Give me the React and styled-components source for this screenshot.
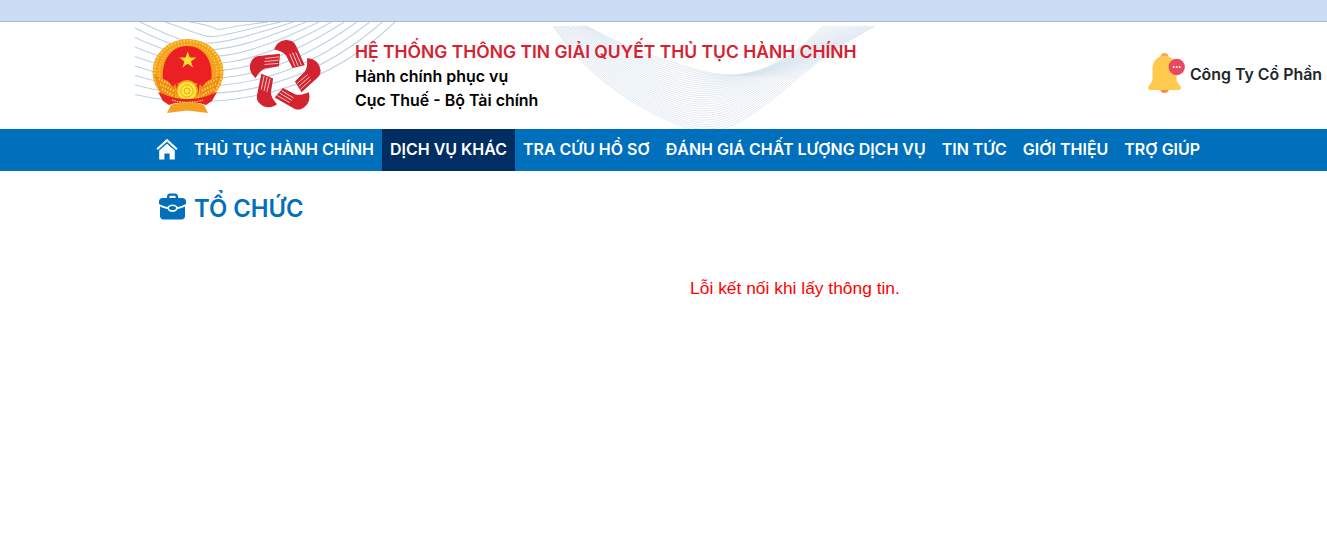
import React from "react"
import styled, { createGlobalStyle } from "styled-components"

/**
 * Styles
 */

const GlobalStyle = createGlobalStyle`
  html, body {
    margin: 0;
    padding: 0;
    background: #fff;
    font-family: Inter, "Noto Sans", sans-serif;
  }
`

const TopStrip = styled.div`
  height: 21px;
  background: #cbdcf5;
  border-bottom: 1px solid #a8b8cf;
`

const Header = styled.header`
  position: relative;
  display: flex;
  align-items: center;
  justify-content: space-between;
  height: 107px;
  padding: 0 5px 0 151px;
  overflow: hidden;
`

const HeaderArt = styled.svg`
  position: absolute;
  left: 0;
  top: 0;
  pointer-events: none;
`

const Brand = styled.div`
  position: relative;
  display: flex;
  align-items: center;
`

const Emblem = styled.svg`
  display: block;
  width: 74px;
  height: 78px;
  margin-right: 25px;
`

const StarLogo = styled.svg`
  display: block;
  width: 72px;
  height: 78px;
  margin-right: 33px;
`

const BrandText = styled.div`
  display: flex;
  flex-direction: column;
  margin-top: 1px;
`

const Title = styled.div`
  font-size: 17.48px;
  line-height: 24px;
  font-weight: 600;
  color: #d7212f;
  margin-bottom: 1px;
`

const SubTitle = styled.div`
  font-size: 15.95px;
  line-height: 24px;
  font-weight: 600;
  color: #000;
`

const Account = styled.div`
  position: relative;
  display: flex;
  align-items: center;
  gap: 5px;
  margin-top: -3px;
  font-size: 15.9px;
  font-weight: 600;
  color: #212529;
`

const Bell = styled.svg`
  display: block;
  margin-top: -2px;
`

const NavBar = styled.nav`
  display: flex;
  height: 42px;
  padding-left: 148px;
  background: #0070bc;
`

const NavItem = styled.a`
  display: flex;
  align-items: center;
  padding: 0 8px 2px;
  font-size: 15.98px;
  font-weight: 600;
  color: #fff;
  white-space: nowrap;
  background: ${p => (p.$active ? "#002d62" : "transparent")};
`

const Main = styled.main`
  padding: 22px 0 0 159px;
`

const Heading = styled.h1`
  display: flex;
  align-items: center;
  gap: 8px;
  margin: 0;
  font-size: 23.8px;
  line-height: 32px;
  font-weight: 600;
  color: #0070bc;
`

const Briefcase = styled.svg`
  display: block;
  margin-bottom: 5px;
`

const ErrorText = styled.p`
  margin: 51px 0 0 104px;
  font-family: "Liberation Sans", Arial, sans-serif;
  font-size: 17.4px;
  line-height: 24px;
  text-align: center;
  color: #ff0000;
`

/**
 * Drawings
 */

const range = n => Array.from({ length: n }, (_, i) => i)

const curve = i => {
  const x0 = i < 3 ? 190 - i * 25 : 135
  const y0 = i < 3 ? 22 : 28 + (i - 3) * 9.5
  const x3 = 268 + i * 12.7
  const mid = 30 + i * 6.6
  const c = (8 * mid - y0 - 22) / 6
  return `M${x0} ${y0} C ${x0 + 60} ${c}, ${x3 - 90} ${c}, ${x3} 22`
}

// control points of the upper and lower edge of the ribbon, lines are blended between them
const waveTop = [587, 26, 615, 42, 640, 52, 663, 59, 690, 68, 710, 75, 730, 75, 765, 75, 795, 55, 823, 26]
const waveBottom = [553, 26, 575, 60, 620, 105, 690, 129, 715, 138, 745, 125, 797, 79, 825, 55, 850, 40, 875, 26]

const wave = i => {
  const t = i / 29
  const p = waveTop.map((v, k) => (v + (waveBottom[k] - v) * t).toFixed(1))
  return `M${p[0]} ${p[1]} C ${p[2]} ${p[3]}, ${p[4]} ${p[5]}, ${p[6]} ${p[7]} C ${p[8]} ${p[9]}, ${p[10]} ${p[11]}, ${p[12]} ${p[13]} C ${p[14]} ${p[15]}, ${p[16]} ${p[17]}, ${p[18]} ${p[19]}`
}

const Decoration = () => (
  <HeaderArt width="1327" height="107" viewBox="0 22 1327 107">
    <g fill="none" stroke="#bcd2e6" strokeWidth="1.1">
      {range(11).map(i => (
        <path key={i} d={curve(i)} />
      ))}
    </g>
    <g fill="none" stroke="#d5e1ed" strokeWidth="0.7">
      {range(30).map(i => (
        <path key={i} d={wave(i)} />
      ))}
    </g>
  </HeaderArt>
)

const EmblemIcon = () => (
  <Emblem viewBox="0 0 74 78">
    <ellipse cx="37" cy="35" rx="35.5" ry="33" fill="#f5a020" />
    <ellipse cx="37" cy="35" rx="33.5" ry="31" fill="none" stroke="#fbd23c" strokeWidth="2.2" strokeDasharray="1.6 1.6" />
    <ellipse cx="37" cy="35" rx="29" ry="27.5" fill="none" stroke="#fbd23c" strokeWidth="1.6" strokeDasharray="1.2 1.8" />
    <path d="M13 50 C 8 26, 19 9, 36 9 C 54 9, 65 26, 59 50 L 36 44 Z" fill="#ec1f24" />
    <path
      d="M36.7 14.5 L38.8 20.6 L45.2 20.6 L40 24.4 L42 30.6 L36.7 26.8 L31.4 30.6 L33.4 24.4 L28.2 20.6 L34.6 20.6 Z"
      fill="#fde02f"
    />
    <path d="M3 38 L24 47 L24 62 L12 64 Z M70 38 L49 47 L49 62 L60 64 Z" fill="#ee8a1a" />
    <path
      d="M8 42 L23 49 M9 47 L23 54 M11 52 L23 59 M66 42 L50 49 M65 47 L50 54 M63 52 L50 59"
      stroke="#fbd23c"
      strokeWidth="2.2"
      strokeDasharray="1.4 1.4"
    />
    <path d="M16 43 L24 47 L22 50 Z M57 43 L49 47 L51 50 Z" fill="#ec1f24" />
    <path d="M24 45 L30 50 L43 50 L49 45 L47 58 L26 58 Z" fill="#ec1f24" />
    <circle cx="36" cy="54" r="11" fill="#f59a1b" />
    <circle cx="36" cy="54" r="9.5" fill="#fde83c" />
    <circle cx="36" cy="54" r="6.2" fill="none" stroke="#f0a21f" strokeWidth="1" />
    <circle cx="36" cy="54" r="3" fill="none" stroke="#f0a21f" strokeWidth="1" />
    <path d="M7 55 L17 59 C 27 63, 46 63, 56 59 L66 55 L61 64 L55 68 C 45 64, 27 64, 18 68 L12 64 Z" fill="#e52322" />
    <path d="M21 63 C 30 66, 43 66, 52 63" stroke="#f7d76b" strokeWidth="1.2" strokeDasharray="1.5 1" fill="none" />
    <path d="M20 68 C 28 65, 45 65, 53 68 L57 76 L36 73.5 L16 76 Z" fill="#f5a020" />
  </Emblem>
)

const StarLogoIcon = () => (
  <StarLogo viewBox="10 6 72 78">
    {range(5).map(i => (
      <g key={i} transform={`rotate(${i * 72} 44.5 45.5)`}>
        <path
          d="M15.7 47 C 10 43, 8.5 36, 11 31 C 12.5 27, 15 25.5, 19 25 L 40 22.7 L 39 35.3 L 25 37.5 C 21 39, 18 43, 15.7 47 Z"
          fill="#d2232e"
        />
        <path
          d="M25 27.4 L39 25.9 M24.5 30.5 L38.6 29.2 M24.5 33.5 L38.2 32.4"
          stroke="#fff"
          strokeWidth="0.7"
          fill="none"
        />
      </g>
    ))}
  </StarLogo>
)

const BellIcon = () => (
  <Bell width="37" height="40" viewBox="0 0 37 40">
    <path d="M12 36 H21 C20.5 39, 18.5 40, 16.5 40 C14.5 40, 12.5 39, 12 36 Z" fill="#ee8f45" />
    <circle cx="16.5" cy="4" r="4" fill="#f7a95b" />
    <path
      d="M16.5 3 C 8.5 3, 4.5 9, 4.5 16 V 25 C 4.5 30, 1.5 31.5, .5 33.5 C -.5 35.5, .5 37, 2.5 37 H 30.5 C 32.5 37, 33.5 35.5, 32.5 33.5 C 31.5 31.5, 28.5 30, 28.5 25 V 16 C 28.5 9, 24.5 3, 16.5 3 Z"
      fill="#ffc94d"
    />
    <circle cx="28.7" cy="14" r="8.2" fill="#e9485e" />
    <circle cx="25.7" cy="14" r="1" fill="#fff" />
    <circle cx="28.7" cy="14" r="1" fill="#fff" />
    <circle cx="31.7" cy="14" r="1" fill="#fff" />
  </Bell>
)

const HomeIcon = () => (
  <svg width="22" height="22" viewBox="0 0 22 22" fill="#fff">
    <path d="M11 .8 L21.6 10.4 L20.2 12 L11 3.8 L1.8 12 L.4 10.4 Z" />
    <path d="M11 5.8 L18.8 12.6 V21.5 H13.6 V15.5 H8.4 V21.5 H3.2 V12.6 Z" />
  </svg>
)

const BriefcaseIcon = () => (
  <Briefcase width="27" height="27" viewBox="0 0 27 27" fill="#0070bc">
    <path d="M8 6 V3.5 C8 1.5, 9.5 .5, 11 .5 H16 C17.5 .5, 19 1.5, 19 3.5 V6 H16.6 V3.6 C16.6 3.1, 16.2 2.8, 15.8 2.8 H11.2 C10.8 2.8, 10.4 3.1, 10.4 3.6 V6 Z" />
    <path d="M3.5 5 H23.5 C25.5 5, 27 6.5, 27 8.5 V11 C23 13, 20 13.8, 18.5 14 C 17 10.5, 10 10.5, 8.5 14 C 7 13.8, 4 13, 0 11 V8.5 C0 6.5, 1.5 5, 3.5 5 Z" />
    <path d="M1 13.5 C4 15, 7 15.8, 8.5 16 C 10 20, 17 20, 18.5 16 C 20 15.8, 23 15, 26 13.5 V23 C26 25, 24.5 26.5, 22.5 26.5 H4.5 C2.5 26.5, 1 25, 1 23 Z" />
    <ellipse cx="13.5" cy="15" rx="3.6" ry="2" />
  </Briefcase>
)

/**
 * Main component
 */

const menu = [
  "THỦ TỤC HÀNH CHÍNH",
  "DỊCH VỤ KHÁC",
  "TRA CỨU HỒ SƠ",
  "ĐÁNH GIÁ CHẤT LƯỢNG DỊCH VỤ",
  "TIN TỨC",
  "GIỚI THIỆU",
  "TRỢ GIÚP"
]

const App = () => (
  <>
    <GlobalStyle />
    <TopStrip />
    <Header>
      <Decoration />
      <Brand>
        <EmblemIcon />
        <StarLogoIcon />
        <BrandText>
          <Title>HỆ THỐNG THÔNG TIN GIẢI QUYẾT THỦ TỤC HÀNH CHÍNH</Title>
          <SubTitle>Hành chính phục vụ</SubTitle>
          <SubTitle>Cục Thuế - Bộ Tài chính</SubTitle>
        </BrandText>
      </Brand>
      <Account>
        <BellIcon />
        Công Ty Cổ Phần
      </Account>
    </Header>
    <NavBar>
      <NavItem>
        <HomeIcon />
      </NavItem>
      {menu.map(o => (
        <NavItem key={o} $active={o === "DỊCH VỤ KHÁC"}>
          {o}
        </NavItem>
      ))}
    </NavBar>
    <Main>
      <Heading>
        <BriefcaseIcon />
        TỔ CHỨC
      </Heading>
      <ErrorText>Lỗi kết nối khi lấy thông tin.</ErrorText>
    </Main>
  </>
)

export default App
